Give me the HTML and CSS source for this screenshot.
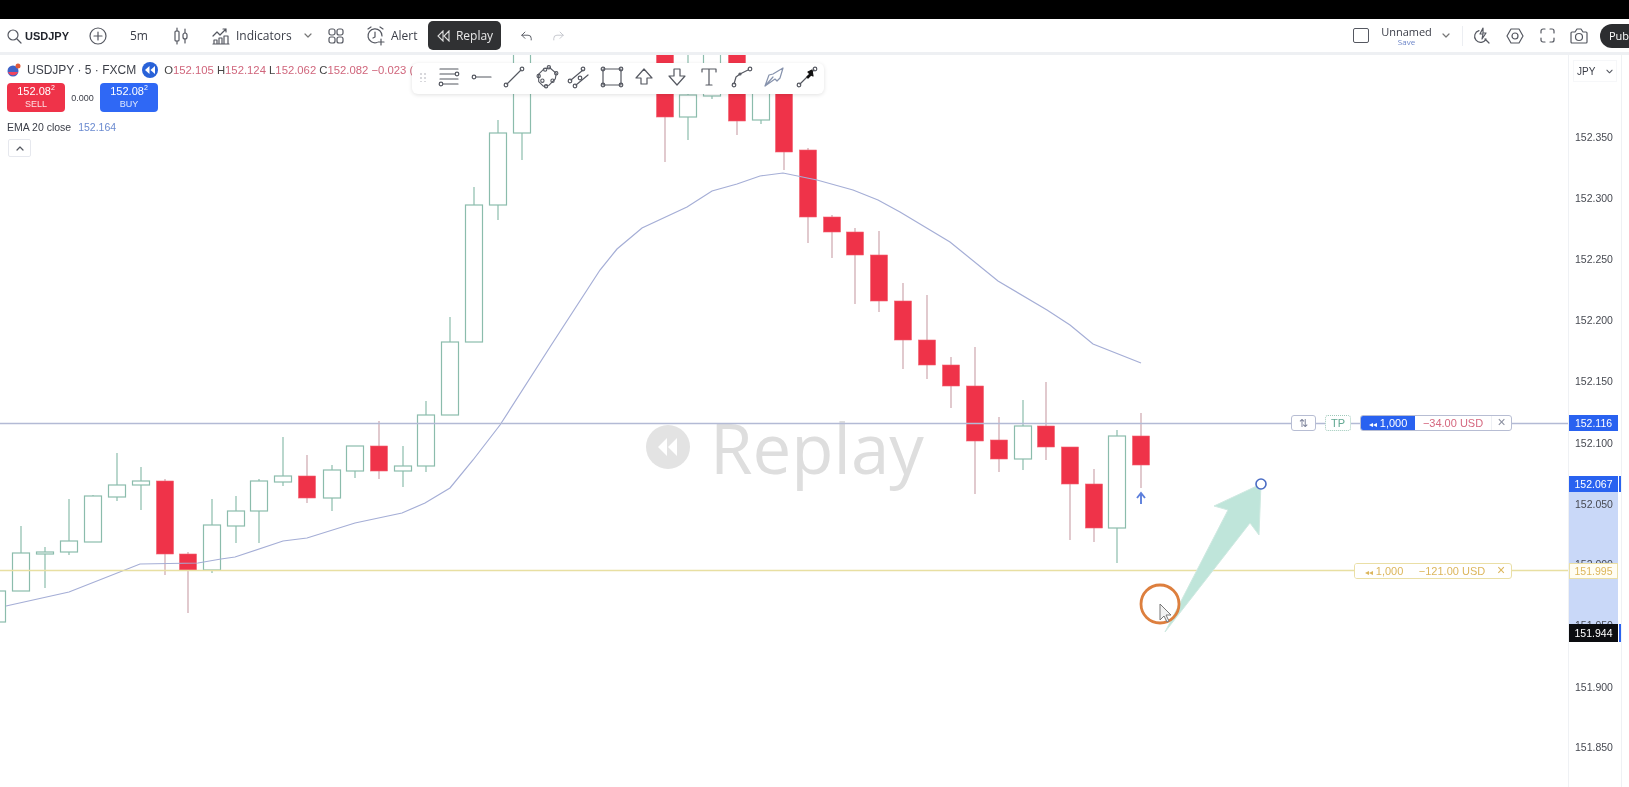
FILE: index.html
```html
<!DOCTYPE html>
<html lang="en">
<head>
  <meta charset="UTF-8">
  <title>USDJPY Replay</title>
  <link rel="stylesheet" href="styles.css">
</head>
<body>

  <div class="franja"></div>

  <header class="cabecera">
    <div class="simbolo">
      <svg class="ico" width="16" height="16" viewBox="0 0 16 16"><circle cx="7" cy="7" r="5"/><path d="M11 11l4 4"/></svg>
      <b>USDJPY</b>
    </div>
    <div class="celda c-add"><svg class="ico" width="18" height="18" viewBox="0 0 18 18"><circle cx="9" cy="9" r="8"/><path d="M9 5v8M5 9h8"/></svg></div>
    <div class="celda c-tf">5m</div>
    <div class="celda c-vela"><svg class="ico" width="16" height="18" viewBox="0 0 16 18"><rect x="2" y="4" width="4" height="10" rx="1"/><path d="M4 1v3M4 14v3M12 2v4M12 12v4"/><rect x="10" y="6" width="4" height="6" rx="2"/></svg></div>
    <div class="celda c-ind">
      <svg class="ico" width="18" height="18" viewBox="0 0 18 18"><path d="M1 9l4-4 3 3 6-6M11 2h3v3"/><path d="M2 17v-4h3v4M7 17v-6h3v6M12 17V9h4v8M1 17h16"/></svg>
      <span>Indicators</span>
    </div>
    <div class="celda c-chev"><svg class="ico fino" width="8" height="5" viewBox="0 0 8 5"><path d="M1 1l3 3 3-3"/></svg></div>
    <div class="celda c-plant"><svg class="ico" width="16" height="16" viewBox="0 0 16 16"><rect x="1" y="1" width="6" height="6" rx="2"/><rect x="9" y="1" width="6" height="6" rx="2"/><rect x="1" y="9" width="6" height="6" rx="2"/><rect x="9" y="9" width="6" height="6" rx="2"/></svg></div>
    <div class="celda c-alerta">
      <svg class="ico" width="20" height="20" viewBox="0 0 20 20"><path d="M11 16.5A7 7 0 1 1 16 10M2 3l3-2M14 1l3 2M9 6v5l-2 1M15 13v6M12 16h6"/></svg>
      <span>Alert</span>
    </div>
    <div class="replay">
      <svg width="15" height="12" viewBox="0 0 15 12"><path d="M7 1L2 6l5 5zM13 1L8 6l5 5z"/></svg>
      <span>Replay</span>
    </div>
    <div class="celda c-undo"><svg class="ico" width="11" height="10" viewBox="0 0 14 12"><path d="M5 1L1 5l4 4M1 5h8a4 4 0 0 1 4 4v2"/></svg></div>
    <div class="celda c-redo"><svg class="ico claro" width="11" height="10" viewBox="0 0 14 12"><path d="M9 1l4 4-4 4M13 5H5a4 4 0 0 0-4 4v2"/></svg></div>

    <div class="espacio"></div>

    <div class="celda c-cuadro"><span class="cuadro"></span></div>
    <div class="nombre"><span>Unnamed</span><small>Save</small></div>
    <div class="celda c-chev2"><svg class="ico fino" width="8" height="5" viewBox="0 0 8 5"><path d="M1 1l3 3 3-3"/></svg></div>
    <div class="divisor"></div>
    <div class="celda c-33"><svg class="ico" width="18" height="18" viewBox="0 0 18 18"><path d="M6 3.600A6 6 0 1 0 13 12M12 12l4 4M10 1L7 7h3l-1 5 4-6h-3z"/></svg></div>
    <div class="celda c-33"><svg class="ico" width="18" height="18" viewBox="0 0 18 18"><path d="M5 2h8l4 7-4 7H5L1 9z"/><circle cx="9" cy="9" r="3"/></svg></div>
    <div class="celda c-32"><svg class="ico" width="15" height="15" viewBox="0 0 15 15"><path d="M1 5V3a2 2 0 0 1 2-2h2M10 1h2a2 2 0 0 1 2 2v2M14 10v2a2 2 0 0 1-2 2h-2M5 14H3a2 2 0 0 1-2-2v-2"/></svg></div>
    <div class="celda c-32"><svg class="ico" width="18" height="16" viewBox="0 0 18 16"><path d="M1 5a1 1 0 0 1 1-1h3l2-3h4l2 3h3a1 1 0 0 1 1 1v9a1 1 0 0 1-1 1H2a1 1 0 0 1-1-1z"/><circle cx="9" cy="9" r="3.500"/></svg></div>
    <div class="publicar">Pub</div>
  </header>

  <main class="cuerpo">
    <section class="grafico" id="grafico">
      <div class="marca">
        <svg width="46" height="46" viewBox="0 0 46 46"><circle cx="23" cy="23" r="22" fill="#e3e3e3"/><path d="M22 14l-9 9 9 9zM32 14l-9 9 9 9z" fill="#fff"/></svg>
        <span>Replay</span>
      </div>

      <svg class="lienzo" id="lienzo" width="1568" height="732" viewBox="0 55 1568 732"></svg>

      <div class="leyenda">
        <div class="fila-titulo">
          <svg width="14" height="14" viewBox="0 0 14 14"><circle cx="6" cy="8" r="5.500" fill="#3f63c8"/><path d="M1 9h10a5.500 5.500 0 0 1-10 0z" fill="#ef4460"/><circle cx="11" cy="3" r="2.500" fill="#e05a3a"/></svg>
          <span class="titulo">USDJPY · 5 · FXCM</span>
          <span class="punto-replay"><svg width="10" height="8" viewBox="0 0 10 8"><path d="M4.500 0L0 4l4.500 4zM10 0L5.500 4l4.500 4z"/></svg></span>
          <span class="ohlc">O<i>152.105</i> H<i>152.124</i> L<i>152.062</i> C<i>152.082</i> <i>−0.023 (</i></span>
        </div>
        <div class="fila-orden">
          <div class="boton-orden venta"><span>152.08<sup>2</sup></span><small>SELL</small></div>
          <span class="spread">0.000</span>
          <div class="boton-orden compra"><span>152.08<sup>2</sup></span><small>BUY</small></div>
        </div>
        <div class="fila-ema">EMA 20 close <span>152.164</span></div>
        <div class="plegar"><svg class="ico" width="8" height="5" viewBox="0 0 8 5"><path d="M1 4l3-3 3 3"/></svg></div>
      </div>

      <div class="herramientas">
        <span class="puntos"></span>
        <svg class="ico h" width="24" height="24" viewBox="0 0 24 24"><path d="M3 4h18M3 9h15M3 14h18M6 19h15"/><circle cx="20" cy="9" r="1.800"/><circle cx="4" cy="19" r="1.800"/></svg>
        <svg class="ico h" width="24" height="24" viewBox="0 0 24 24"><path d="M6 12h15"/><circle cx="4" cy="12" r="1.800"/></svg>
        <svg class="ico h" width="24" height="24" viewBox="0 0 24 24"><path d="M5 19L19 5"/><circle cx="4" cy="20" r="1.800"/><circle cx="20" cy="4" r="1.800"/></svg>
        <svg class="ico h" width="26" height="26" viewBox="0 0 26 26"><path d="M4 10l6-6 6-1 7 6-1 6-7 7-6 1-5-5z"/><circle cx="4" cy="12" r="1.800"/><circle cx="11" cy="5" r="1.800"/><circle cx="15" cy="2.500" r="1.800"/><circle cx="23" cy="9" r="1.800"/><circle cx="19" cy="17" r="1.800"/><circle cx="12" cy="23" r="1.800"/><circle cx="8" cy="17" r="1.800"/></svg>
        <svg class="ico h" width="24" height="24" viewBox="0 0 24 24"><path d="M4 15L16 5M9 20l12-10"/><circle cx="3" cy="16" r="1.800"/><circle cx="16" cy="4" r="1.800"/><circle cx="8" cy="21" r="1.800"/><circle cx="13" cy="13" r="1.800"/></svg>
        <svg class="ico h" width="24" height="24" viewBox="0 0 24 24"><rect x="3" y="4" width="18" height="16"/><circle cx="3" cy="4" r="1.800"/><circle cx="21" cy="4" r="1.800"/><circle cx="3" cy="20" r="1.800"/><circle cx="21" cy="20" r="1.800"/></svg>
        <svg class="ico h" width="24" height="24" viewBox="0 0 24 24"><path d="M12 4l8 9h-5v6H9v-6H4z"/></svg>
        <svg class="ico h" width="24" height="24" viewBox="0 0 24 24"><path d="M9 4h6v7h5l-8 9-8-9h5z"/></svg>
        <svg class="ico h" width="24" height="24" viewBox="0 0 24 24"><path d="M5 7V4h14v3M12 4v16M9 20h6"/></svg>
        <svg class="ico h" width="24" height="24" viewBox="0 0 24 24"><path d="M4 19l2-7 4-3 8-4"/><circle cx="4" cy="20" r="1.800"/><circle cx="20" cy="4" r="1.800"/><circle cx="10" cy="9" r="1"/></svg>
        <svg class="ico h gris" width="24" height="24" viewBox="0 0 24 24"><path d="M3 21L7 10L11 9L21 3L18 13L15 16L13 14zM3 21l8-9"/></svg>
        <svg class="ico h" width="24" height="24" viewBox="0 0 24 24"><path d="M5 19L19 5"/><circle cx="4" cy="20" r="1.800"/><circle cx="20" cy="4" r="1.800"/><path class="relleno" d="M17 5l1 6-2-1-3 3-1-1 3-3-2-2z"/></svg>
      </div>

      <div class="orden orden-tp">
        <span class="cambio">⇅</span>
        <span class="guion"></span>
        <span class="tp">TP</span>
        <span class="guion"></span>
        <div class="orden-caja">
          <span class="cantidad"><em>◂◂</em> 1,000</span>
          <span class="pnl">−34.00 USD</span>
          <span class="cerrar">×</span>
        </div>
      </div>

      <div class="orden orden-sl">
        <div class="orden-caja">
          <span class="cantidad"><em>◂◂</em> 1,000</span>
          <span class="pnl">−121.00 USD</span>
          <span class="cerrar">×</span>
        </div>
      </div>
    </section>

    <aside class="escala" id="escala">
      <div class="moneda"><span>JPY</span><svg class="ico" width="7" height="5" viewBox="0 0 8 5"><path d="M1 1l3 3 3-3"/></svg></div>
      <div class="rango"></div>
    </aside>
    <div class="margen"></div>
  </main>

  <script>
    // x, techo, cuerpo arriba, cuerpo abajo, suelo, s = sube / b = baja
    const velas = [
      [-3,575,591,622,622,'s'],[21,526,553,591,591,'s'],[45,547,552,554,588,'s'],[69,499,541,552,555,'s'],
      [93,495,496,542,542,'s'],[117,453,485,497,501,'s'],[141,467,481,485,510,'s'],[165,479,481,554,575,'b'],
      [188,552,554,570,613,'b'],[212,499,525,570,573,'s'],[236,496,511,526,543,'s'],[259,479,481,511,543,'s'],
      [283,437,476,482,486,'s'],[307,455,476,498,503,'b'],[332,465,470,498,511,'s'],[355,446,446,471,478,'s'],
      [379,421,446,471,479,'b'],[403,446,466,471,487,'s'],[426,401,415,466,472,'s'],[450,317,342,415,415,'s'],
      [474,187,205,342,342,'s'],[498,120,133,205,220,'s'],[522,40,40,133,160,'s'],
      [665,40,40,117,162,'b'],[688,40,95,117,140,'s'],[712,40,40,96,99,'s'],[737,40,40,121,135,'b'],
      [761,70,80,120,124,'s'],[784,70,85,152,170,'b'],[808,148,150,217,243,'b'],[832,215,217,232,258,'b'],
      [855,228,232,255,304,'b'],[879,231,255,301,312,'b'],[903,283,301,340,369,'b'],[927,295,340,365,379,'b'],
      [951,357,365,386,408,'b'],[975,347,386,441,494,'b'],[999,417,440,459,472,'b'],[1023,400,426,459,470,'s'],
      [1046,382,426,447,460,'b'],[1070,447,447,484,540,'b'],[1094,469,484,528,542,'b'],[1117,430,436,528,563,'s'],
      [1141,413,436,465,488,'b']
    ];

    const ema = '6,606 69,592 140,564 198,563 221,559 235,557 283,541 307,538 355,523 402,513 425,503 450,488 ' +
      '473,460 500,425 550,347 600,270 617,249 642,228 687,207 712,191 737,184 760,176 783,173 817,180 853,190 ' +
      '878,200 900,212 950,242 998,281 1047,310 1070,325 1093,344 1141,363';

    const etiquetas = [
      ['152.350',137],['152.300',198],['152.250',259],['152.200',320],['152.150',381],['152.100',443],
      ['152.050',504],['152.000',564],['151.950',625],['151.900',687],['151.850',747]
    ];

    const marcas = [
      ['152.116',423,'azul'],['152.067',484,'azul con-marca'],['151.995',570.5,'amarilla'],['151.944',632,'negra con-marca']
    ];

    let svg = '';
    velas.forEach(v => {
      const clase = v[5] === 's' ? 'sube' : 'baja';
      svg += `<line class="mecha-${clase}" x1="${v[0]}" x2="${v[0]}" y1="${v[1]}" y2="${v[4]}"/>`;
      svg += `<rect class="${clase}" x="${v[0] - 8.5}" y="${v[2]}" width="17" height="${v[3] - v[2]}"/>`;
    });
    svg += `<polyline class="ema" points="${ema}"/>`;
    svg += '<line class="linea-tp" x1="0" x2="1568" y1="423.500" y2="423.500"/>';
    svg += '<line class="linea-sl" x1="0" x2="1568" y1="570.500" y2="570.500"/>';
    svg += '<path class="flecha-compra" d="M1141 504v-10M1137 498l4-5 4 5"/>';
    svg += '<path class="dibujo" d="M1261 484L1214 506L1228 510L1165 632L1250 523L1259 535Z"/>';
    svg += '<circle class="asa" cx="1261" cy="484" r="5"/>';
    svg += '<circle class="clic" cx="1160" cy="604" r="19"/>';
    svg += '<path class="cursor" d="M1160 604l0 16 4-4 3 6 2-1-3-6 5 0z"/>';
    document.getElementById('lienzo').innerHTML = svg;

    const escala = document.getElementById('escala');
    etiquetas.forEach(e => {
      const div = document.createElement('div');
      div.className = 'precio';
      div.style.top = (e[1] - 55 - 7) + 'px';
      div.textContent = e[0];
      escala.appendChild(div);
    });
    marcas.forEach(m => {
      const div = document.createElement('div');
      div.className = 'etiqueta ' + m[2];
      div.style.top = (m[1] - 55 - 8) + 'px';
      div.textContent = m[0];
      escala.appendChild(div);
    });
  </script>

</body>
</html>
```

FILE: styles.css
```css
* {
  box-sizing: border-box;
}

html, body {
  height: 100%;
}

body {
  margin: 0;
  background-color: #fff;
  color: #3a3d47;
  font-family: "Open Sans", "Liberation Sans", sans-serif;
  font-size: 12px;
  display: flex;
  flex-direction: column;
  overflow: hidden;
  filter: blur(0.4px);
}

.franja {
  height: 19px;
  background-color: #000;
  flex-shrink: 0;
}

.ico {
  fill: none;
  stroke: #555861;
  stroke-width: 1.2;
  stroke-linecap: round;
  stroke-linejoin: round;
  flex-shrink: 0;
}

.ico.fino {
  stroke: #777;
}

.ico.claro {
  stroke: #c4c6cc;
}

.ico.gris {
  stroke: #8793ad;
}

.relleno {
  fill: #111;
  stroke: #111;
}

/* cabecera */
.cabecera {
  height: 36px;
  display: flex;
  align-items: center;
  border-bottom: 3px solid #eef0f3;
  flex-shrink: 0;
}

.simbolo {
  width: 80px;
  padding-left: 6px;
  display: flex;
  align-items: center;
  gap: 3px;
  color: #22252d;
  font-family: "Liberation Sans", sans-serif;
  font-size: 11px;
}

.celda {
  display: flex;
  align-items: center;
  justify-content: center;
  height: 100%;
  flex-shrink: 0;
}

.c-add { width: 36px; }
.c-tf { width: 46px; }
.c-vela { width: 38px; }
.c-chev { width: 16px; }
.c-plant { width: 40px; }
.c-undo { width: 50px; }
.c-redo { width: 14px; }
.c-cuadro { width: 20px; }
.c-chev2 { width: 28px; }
.c-33 { width: 33px; }
.c-32 { width: 32px; }

.c-ind {
  width: 100px;
  padding-left: 12px;
  justify-content: flex-start;
  gap: 6px;
}

.c-alerta {
  width: 72px;
  padding-left: 10px;
  justify-content: flex-start;
  gap: 5px;
}

.replay {
  width: 73px;
  height: 29px;
  background-color: #303133;
  color: #e8e8e8;
  border-radius: 5px;
  display: flex;
  align-items: center;
  justify-content: center;
  gap: 5px;
  flex-shrink: 0;
}

.replay svg {
  fill: none;
  stroke: #ddd;
  stroke-width: 1.1;
}

.espacio {
  flex: 1;
}

.cuadro {
  width: 16px;
  height: 15px;
  border: 1.3px solid #555861;
  border-radius: 2px;
}

.nombre {
  width: 51px;
  margin-left: 10px;
  display: flex;
  flex-direction: column;
  align-items: center;
  line-height: 11px;
  font-size: 11px;
}

.nombre small {
  color: #6d86c9;
  font-size: 8px;
  line-height: 9px;
}

.divisor {
  width: 1px;
  height: 20px;
  margin: 0 2px;
  background-color: #eceef2;
}

.publicar {
  width: 29px;
  height: 24px;
  margin-left: 5px;
  padding-left: 9px;
  background-color: #2c2d30;
  color: #fff;
  border-radius: 12px 0 0 12px;
  font-size: 11px;
  line-height: 24px;
  white-space: nowrap;
  flex-shrink: 0;
}

/* cuerpo */
.cuerpo {
  flex: 1;
  display: flex;
  min-height: 0;
}

.grafico {
  flex: 1;
  position: relative;
  overflow: hidden;
}

.lienzo {
  position: absolute;
  top: 0;
  left: 0;
}

.sube {
  fill: #fff;
  stroke: #8bbcac;
  stroke-width: 1.2;
}

.baja {
  fill: #ef3349;
  stroke: #f1606f;
  stroke-width: 0.6;
}

.mecha-sube {
  stroke: #8bbcac;
  stroke-width: 1.2;
}

.mecha-baja {
  stroke: #cda6ae;
  stroke-width: 1.2;
}

.ema {
  fill: none;
  stroke: #a5aed6;
  stroke-width: 1.2;
}

.linea-tp {
  stroke: #b3bad5;
  stroke-width: 1.3;
}

.linea-sl {
  stroke: #e8dfa2;
  stroke-width: 1.3;
}

.flecha-compra {
  fill: none;
  stroke: #5d7fdc;
  stroke-width: 1.9;
}

.dibujo {
  fill: #bfe5da;
  stroke: #cfe9e1;
  stroke-width: 1;
}

.asa {
  fill: #fff;
  stroke: #4a6cc4;
  stroke-width: 1.6;
}

.clic {
  fill: none;
  stroke: #dd7f3e;
  stroke-width: 2.8;
}

.cursor {
  fill: #f2f2f2;
  stroke: #777;
  stroke-width: 1;
}

/* marca de agua */
.marca {
  position: absolute;
  left: 645px;
  top: 350px;
  display: flex;
  align-items: center;
  gap: 19px;
  color: #dedede;
  font-size: 69px;
  line-height: 84px;
}

/* leyenda */
.leyenda {
  position: absolute;
  top: 4px;
  left: 7px;
  display: flex;
  flex-direction: column;
}

.fila-titulo {
  display: flex;
  align-items: center;
  height: 22px;
  white-space: nowrap;
}

.titulo {
  margin-left: 6px;
  color: #3c3f48;
  font-family: "Liberation Sans", sans-serif;
  font-size: 12px;
}

.punto-replay {
  width: 16px;
  height: 16px;
  margin-left: 6px;
  border-radius: 50%;
  background-color: #2962d8;
  display: flex;
  align-items: center;
  justify-content: center;
}

.punto-replay svg {
  fill: #fff;
}

.ohlc {
  margin-left: 6px;
  font-family: "Liberation Sans", sans-serif;
  font-size: 11.300px;
  color: #444;
}

.ohlc i {
  font-style: normal;
  color: #d0667c;
}

.fila-orden {
  display: flex;
  align-items: center;
  margin-top: 2px;
}

.boton-orden {
  width: 58px;
  height: 29px;
  border-radius: 4px;
  color: #fff;
  display: flex;
  flex-direction: column;
  align-items: center;
  font-family: "Liberation Sans", sans-serif;
  font-size: 11px;
  line-height: 14px;
  padding-top: 1px;
}

.boton-orden sup {
  font-size: 7px;
  line-height: 0;
}

.boton-orden small {
  font-size: 9px;
  line-height: 12px;
  opacity: 0.85;
}

.venta {
  background-color: #ef3349;
}

.compra {
  background-color: #2f68f5;
}

.spread {
  width: 35px;
  text-align: center;
  font-family: "Liberation Sans", sans-serif;
  font-size: 9px;
}

.fila-ema {
  margin-top: 7px;
  height: 16px;
  line-height: 16px;
  font-family: "Liberation Sans", sans-serif;
  font-size: 10.500px;
}

.fila-ema span {
  margin-left: 4px;
  color: #6a8ad0;
}

.plegar {
  width: 23px;
  height: 18px;
  margin-top: 4px;
  margin-left: 1px;
  border: 1px solid #e6e8ee;
  border-radius: 2px;
  display: flex;
  align-items: center;
  justify-content: center;
}

/* barra de herramientas */
.herramientas {
  position: absolute;
  left: 412px;
  top: 8px;
  width: 412px;
  height: 31px;
  padding-left: 4px;
  padding-bottom: 3px;
  background-color: #fff;
  border-radius: 6px;
  box-shadow: 0 1px 4px rgba(0, 0, 0, 0.12);
  display: flex;
  align-items: center;
}

.puntos {
  width: 8px;
  height: 10px;
  margin: 0 6px 0 3px;
  background-image: radial-gradient(circle, #d8d8dc 1px, transparent 1.2px);
  background-size: 4px 4px;
  flex-shrink: 0;
}

.h {
  width: 24px;
  margin: 0 4.250px;
}

/* ordenes */
.orden {
  position: absolute;
  right: 56px;
  display: flex;
  align-items: center;
  font-family: "Liberation Sans", sans-serif;
  font-size: 11px;
}

.orden-tp {
  top: 360px;
  height: 16px;
}

.orden-sl {
  top: 508px;
  height: 16px;
}

.orden-caja {
  width: 152px;
  height: 100%;
  display: flex;
  align-items: center;
  background-color: #fff;
  border: 1px solid #b7bdd3;
  border-radius: 3px;
  overflow: hidden;
}

.cantidad {
  width: 54px;
  height: 100%;
  background-color: #2962f0;
  color: #fff;
  line-height: 14px;
  text-align: center;
  flex-shrink: 0;
}

.cantidad em {
  font-style: normal;
  font-size: 8px;
}

.pnl {
  flex: 1;
  text-align: center;
  color: #d5687f;
  line-height: 14px;
}

.cerrar {
  width: 20px;
  height: 100%;
  border-left: 1px solid #eef0f4;
  color: #8b90a0;
  font-size: 14px;
  line-height: 13px;
  text-align: center;
  flex-shrink: 0;
}

.cambio {
  width: 25px;
  height: 16px;
  border: 1px solid #b7bdd3;
  border-radius: 3px;
  background-color: #fff;
  color: #7a8199;
  line-height: 14px;
  text-align: center;
}

.guion {
  width: 9px;
  height: 1px;
  background-color: #b3bad5;
}

.tp {
  width: 26px;
  height: 16px;
  border: 1px dotted #9fc9bb;
  border-radius: 3px;
  background-color: #fff;
  color: #62a892;
  line-height: 14px;
  text-align: center;
}

.orden-sl .orden-caja {
  width: 158px;
  border-color: #eadfa6;
}

.orden-sl .cantidad {
  width: 58px;
  background-color: #fff;
  color: #dcb65c;
}

.orden-sl .pnl {
  color: #dcb65c;
}

.orden-sl .cerrar {
  border-left: none;
  color: #dcb65c;
}

/* escala de precios */
.escala {
  width: 54px;
  position: relative;
  border-left: 1px solid #eff1f4;
  border-right: 1px solid #eff1f4;
  flex-shrink: 0;
}

.moneda {
  height: 22px;
  margin: 5px 4px 0 4px;
  padding: 0 3px;
  border: 1px solid #f6f7f9;
  display: flex;
  align-items: center;
  justify-content: space-between;
  font-family: "Liberation Sans", sans-serif;
  font-size: 10px;
}

.rango {
  position: absolute;
  left: 0;
  top: 429px;
  width: 49px;
  height: 148px;
  background-color: #c9d8f8;
}

.precio {
  position: absolute;
  left: 6px;
  height: 14px;
  color: #474a52;
  font-family: "Liberation Sans", sans-serif;
  font-size: 10.500px;
  line-height: 14px;
}

.etiqueta {
  position: absolute;
  left: 0;
  width: 49px;
  height: 16px;
  font-family: "Liberation Sans", sans-serif;
  font-size: 10.500px;
  line-height: 16px;
  text-align: center;
}

.con-marca::after {
  content: "";
  position: absolute;
  top: 0;
  right: -3px;
  width: 2px;
  height: 100%;
  background-color: #2962f0;
}

.azul {
  background-color: #2962f0;
  color: #fff;
}

.amarilla {
  background-color: #fffdf3;
  border: 1px solid #eadfa6;
  color: #dcb65c;
  line-height: 14px;
}

.negra {
  height: 18px;
  background-color: #0c0d10;
  color: #fff;
  line-height: 18px;
}

.margen {
  width: 7px;
  flex-shrink: 0;
}
```
